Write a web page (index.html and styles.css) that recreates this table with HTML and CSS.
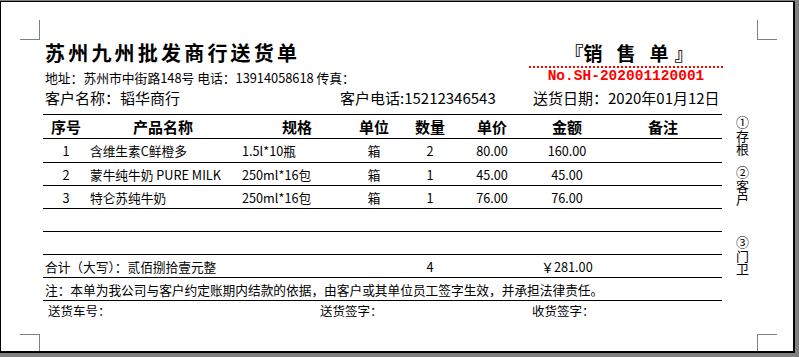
FILE: index.html
```html
<!DOCTYPE html>
<html lang="zh-CN">
<head>
<meta charset="utf-8">
<title>苏州九州批发商行送货单</title>
<link rel="stylesheet" href="styles.css">
</head>
<body>
<div class="page">
  <span class="mark mark-tl"></span>
  <span class="mark mark-tr"></span>
  <span class="mark mark-bl"></span>
  <span class="mark mark-br"></span>

  <div class="sheet">
    <div class="main">
      <div class="head-a">
        <h1 class="title">苏州九州批发商行送货单</h1>
        <div class="kind">『销<span class="gap">售</span>单<span class="end">』</span></div>
      </div>
      <div class="head-b">
        <div class="addr">地址：苏州市中街路148号 电话：13914058618 传真：</div>
        <div class="no">No.SH-202001120001</div>
      </div>
      <div class="head-c">
        <div class="cust">客户名称：韬华商行</div>
        <div class="phone">客户电话:15212346543</div>
        <div class="date">送货日期：2020年01月12日</div>
      </div>

      <div class="table">
        <div class="row thead tall">
          <div>序号</div><div>产品名称</div><div>规格</div><div>单位</div>
          <div>数量</div><div>单价</div><div>金额</div><div>备注</div>
        </div>
        <div class="row tall">
          <div>1</div><div class="l name">含维生素C鲜橙多</div><div class="l spec">1.5l*10瓶</div><div>箱</div>
          <div>2</div><div>80.00</div><div>160.00</div><div></div>
        </div>
        <div class="row">
          <div>2</div><div class="l name">蒙牛纯牛奶 PURE MILK</div><div class="l spec">250ml*16包</div><div>箱</div>
          <div>1</div><div>45.00</div><div>45.00</div><div></div>
        </div>
        <div class="row">
          <div>3</div><div class="l name">特仑苏纯牛奶</div><div class="l spec">250ml*16包</div><div>箱</div>
          <div>1</div><div>76.00</div><div>76.00</div><div></div>
        </div>
        <div class="row"></div>
        <div class="row"></div>
        <div class="row">
          <div class="l total">合计（大写）：贰佰捌拾壹元整</div>
          <div class="c-qty">4</div>
          <div class="c-amt">￥281.00</div>
        </div>
        <div class="row note-row">
          <div class="l note">注：本单为我公司与客户约定账期内结款的依据，由客户或其单位员工签字生效，并承担法律责任。</div>
        </div>
      </div>
      <div class="sign">
        <div>送货车号：</div>
        <div>送货签字：</div>
        <div>收货签字：</div>
      </div>
    </div>

    <div class="side">
      <div class="copy first">①存根</div>
      <div class="copy second">②客户</div>
      <div class="copy third">③门卫</div>
    </div>
  </div>
</div>
</body>
</html>
```

FILE: styles.css
```css
html, body {
  margin: 0;
  padding: 0;
}
body {
  background: #808080;
  width: 799px;
  height: 357px;
  overflow: hidden;
  font-family: "Noto Sans CJK SC", "Noto Sans", sans-serif;
  color: #000;
}
.page {
  position: relative;
  box-sizing: border-box;
  width: 795px;
  height: 352px;
  margin-top: 1px;
  background: #fff;
  border-top: 1px solid #000;
  border-left: 1px solid #000;
  border-right: 2px solid #000;
  border-bottom: 2px solid #000;
  padding: 38px 0 0 42px;
}
.mark {
  position: absolute;
  width: 20px;
  height: 20px;
  box-sizing: border-box;
  border: 0 solid #808080;
}
.mark-tl { left: 19px; top: 18px; border-right-width: 1px; border-bottom-width: 1px; }
.mark-tr { left: 756px; top: 18px; border-left-width: 1px; border-bottom-width: 1px; }
.mark-bl { left: 19px; top: 332px; height: 17px; border-right-width: 1px; border-top-width: 1px; }
.mark-br { left: 756px; top: 332px; height: 17px; border-left-width: 1px; border-top-width: 1px; }

.sheet {
  display: flex;
}
.main {
  width: 679px;
}
.head-a {
  display: flex;
  justify-content: space-between;
  height: 28px;
}
.title {
  margin: 0 0 0 2px;
  font-size: 20px;
  line-height: 26px;
  font-weight: 700;
  letter-spacing: 3.2px;
}
.kind {
  box-sizing: border-box;
  width: 194px;
  height: 28px;
  margin-right: -1px;
  border-bottom: 2px dotted #ff0000;
  text-align: center;
  font-size: 19px;
  line-height: 26px;
  font-weight: 700;
  padding-left: 6px;
}
.kind .gap { margin: 0 14px; }
.kind .end { margin-left: 6px; }
.head-b {
  display: flex;
  justify-content: space-between;
  height: 20px;
}
.addr {
  margin-left: 2px;
  font-size: 12.8px;
  line-height: 20px;
}
.no {
  width: 194px;
  margin-right: -1px;
  text-align: center;
  font-family: "Liberation Mono", monospace;
  font-weight: 700;
  font-size: 14.5px;
  line-height: 16px;
  color: #ff0000;
}
.head-c {
  display: grid;
  grid-template-columns: 297px 193px 1fr;
  height: 20px;
  margin-bottom: 6px;
  font-size: 15px;
  line-height: 20px;
}
.cust { padding-left: 2px; }

.table {
  font-size: 12.7px;
}
.row {
  box-sizing: border-box;
  display: grid;
  grid-template-columns: 46px 148px 120px 34px 78px 46px 104px 88px 1fr;
  align-items: center;
  height: 23px;
  border-top: 1px solid #000;
  text-align: center;
  white-space: nowrap;
}
.row.tall { height: 24px; }
.thead {
  font-size: 15px;
  font-weight: 700;
}
.row .l { text-align: left; }
.name { padding-left: 1px; }
.spec { padding-left: 5px; }
.total { grid-column: 1 / 5; padding-left: 2px; }
.c-qty { grid-column: 5; }
.c-amt { grid-column: 7; }
.note-row {
  height: 24px;
  border-bottom: 1px solid #000;
}
.note { grid-column: 1 / -1; padding-left: 2px; }

.sign {
  display: grid;
  grid-template-columns: 272px 212px 1fr;
  padding-left: 5px;
  font-size: 12.5px;
  line-height: 19px;
}

.side {
  margin-left: 13px;
  width: 14px;
  display: flex;
  flex-direction: column;
  align-items: center;
}
.copy {
  writing-mode: vertical-rl;
  text-orientation: upright;
  font-size: 13px;
  line-height: 14px;
  letter-spacing: 0.5px;
  height: 41px;
}
.copy.first { margin-top: 76px; }
.copy.second { margin-top: 9px; }
.copy.third { margin-top: 29px; }
```
